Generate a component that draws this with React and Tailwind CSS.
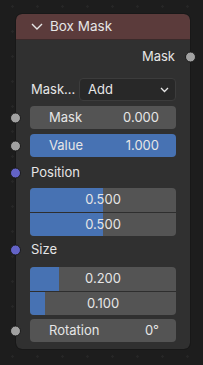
import React from "react";

const font = { fontFamily: "Inter, 'Noto Sans', sans-serif" };

function Socket({ color, side = "left" }) {
  return (
    <span
      className={`absolute top-1/2 -translate-y-1/2 w-[11px] h-[11px] rounded-full border border-[#1a1a1a] ${color} ${
        side === "left" ? "left-[-6px]" : "right-[-6px]"
      }`}
    />
  );
}

function Field({ label, value, fill }) {
  return (
    <div className="relative h-[23px]">
      <Socket color="bg-[#a1a1a1]" />
      <div
        className={`ml-[14px] mr-[14px] h-full rounded-[4px] flex items-center justify-between pl-[19px] pr-[17px] text-[13px] text-[#e6e6e6] ${
          fill ? "bg-[#4772b3]" : "bg-[#545454]"
        }`}
      >
        <span>{label}</span>
        <span>{value}</span>
      </div>
    </div>
  );
}

function Vector({ values }) {
  return (
    <div className="mx-[14px] rounded-[4px] overflow-hidden flex flex-col bg-[#545454]">
      {values.map((v, i) => (
        <div
          key={i}
          className={`relative h-[24px] flex items-center justify-center text-[13px] text-[#e6e6e6] ${
            i > 0 ? "border-t border-[#2e2e2e]" : ""
          }`}
        >
          <div
            className="absolute left-0 top-0 bottom-0 bg-[#4772b3]"
            style={{ width: `${v * 100}%` }}
          />
          <span className="relative">{v.toFixed(3)}</span>
        </div>
      ))}
    </div>
  );
}

function Label({ text }) {
  return (
    <div className="relative h-[20px] flex items-center pl-[15px] text-[13px] text-[#e6e6e6]">
      <Socket color="bg-[#6363c7]" />
      {text}
    </div>
  );
}

export default function App() {
  return (
    <div
      className="w-[203px] h-[365px] bg-[#1d1d1d] bg-[radial-gradient(circle,#262626_1px,transparent_1.5px)] bg-[length:25px_25px] bg-[position:0px_-6px] pt-[14px] pl-[16px]"
      style={font}
    >
      <div className="w-[174px] h-[335px] rounded-[6px] bg-[#303030] outline outline-1 outline-[#181818] flex flex-col">
        <div className="h-[26px] rounded-t-[6px] bg-[#5b3b3b] flex items-center pl-[15px] border-b border-[#3a2a2a]">
          <svg width="12" height="7" viewBox="0 0 12 7" className="mr-[7px]">
            <path d="M1 1 L6 6 L11 1" fill="none" stroke="#e6e6e6" strokeWidth="1.4" />
          </svg>
          <span className="text-[13.5px] text-[#e6e6e6]">Box Mask</span>
        </div>

        <div className="relative h-[20px] mt-[7px] flex items-center justify-end pr-[15px] text-[13px] text-[#e6e6e6]">
          {"Mask"}
          <Socket color="bg-[#a1a1a1]" side="right" />
        </div>

        <div className="mt-[11px] h-[23px] flex items-center pl-[15px] pr-[14px]">
          <span className="text-[13px] text-[#e6e6e6] w-[48px]">Mask...</span>
          <div className="flex-1 h-full rounded-[4px] bg-[#282828] border border-[#3c3c3c] flex items-center justify-between pl-[8px] pr-[6px] text-[13px] text-[#e6e6e6]">
            <span>Add</span>
            <svg width="9" height="6" viewBox="0 0 9 6">
              <path d="M1 1 L4.5 4.5 L8 1" fill="none" stroke="#e6e6e6" strokeWidth="1.3" />
            </svg>
          </div>
        </div>

        <div className="mt-[5px]">
          <Field label="Mask" value="0.000" />
        </div>
        <div className="mt-[5px]">
          <Field label="Value" value="1.000" fill />
        </div>

        <div className="mt-[6px]">
          <Label text="Position" />
        </div>
        <div className="mt-[5px]">
          <Vector values={[0.5, 0.5]} />
        </div>

        <div className="mt-[4px]">
          <Label text="Size" />
        </div>
        <div className="mt-[7px]">
          <Vector values={[0.2, 0.1]} />
        </div>

        <div className="mt-[4px]">
          <Field label="Rotation" value="0°" />
        </div>
      </div>
    </div>
  );
}
